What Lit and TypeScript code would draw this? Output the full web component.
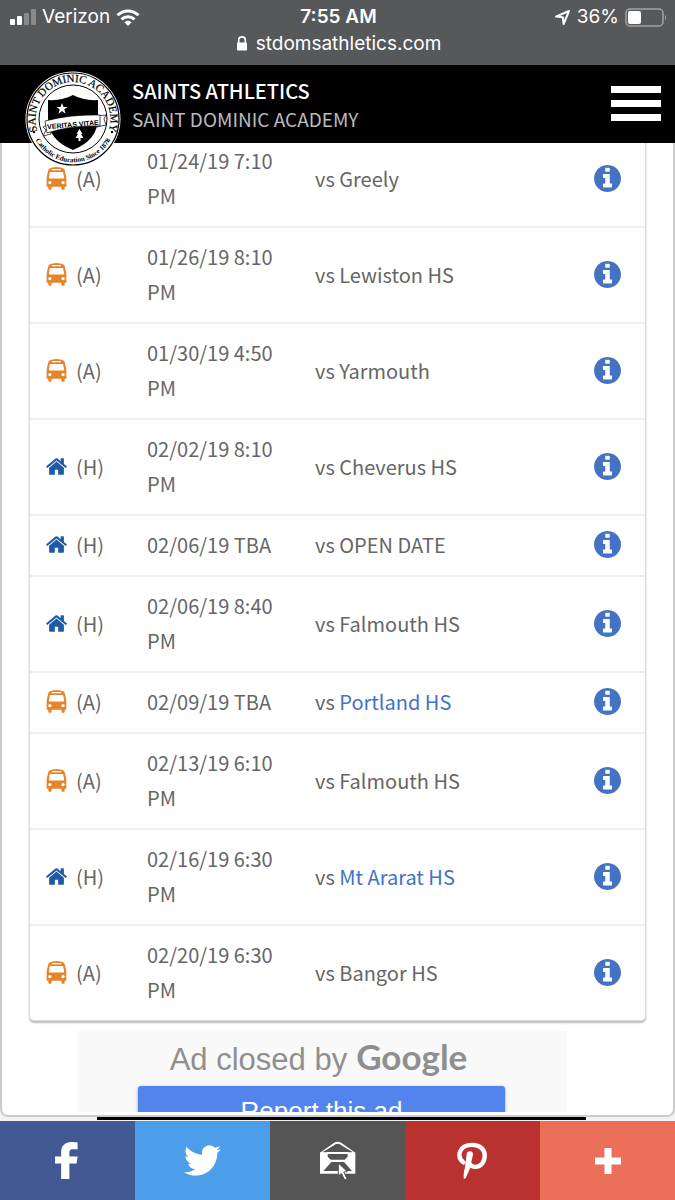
import { LitElement, html, css, svg } from 'lit';
import { customElement, property } from 'lit/decorators.js';

interface Game {
  home: boolean;
  date: string;
  opponent: string;
  linked?: boolean;
}

const GAMES: Game[] = [
  { home: false, date: '01/24/19 7:10 PM', opponent: 'Greely' },
  { home: false, date: '01/26/19 8:10 PM', opponent: 'Lewiston HS' },
  { home: false, date: '01/30/19 4:50 PM', opponent: 'Yarmouth' },
  { home: true, date: '02/02/19 8:10 PM', opponent: 'Cheverus HS' },
  { home: true, date: '02/06/19 TBA', opponent: 'OPEN DATE' },
  { home: true, date: '02/06/19 8:40 PM', opponent: 'Falmouth HS' },
  { home: false, date: '02/09/19 TBA', opponent: 'Portland HS', linked: true },
  { home: false, date: '02/13/19 6:10 PM', opponent: 'Falmouth HS' },
  { home: true, date: '02/16/19 6:30 PM', opponent: 'Mt Ararat HS', linked: true },
  { home: false, date: '02/20/19 6:30 PM', opponent: 'Bangor HS' },
];

const busIcon = html`<svg class="bus" viewBox="0 0 1792 1792" aria-hidden="true">
  <path d="M512 1216q0-53-37.5-90.5t-90.5-37.5-90.5 37.5-37.5 90.5 37.5 90.5 90.5 37.5 90.5-37.5 37.5-90.5zm1024 0q0-53-37.5-90.5t-90.5-37.5-90.5 37.5-37.5 90.5 37.5 90.5 90.5 37.5 90.5-37.5 37.5-90.5zm-46-396l-72-384q-5-23-22.5-37.5t-40.5-14.5h-918q-23 0-40.5 14.5t-22.5 37.5l-72 384q-5 30 14 53t49 23h1062q30 0 49-23t14-53zm-226-612q0-20-14-34t-34-14h-640q-20 0-34 14t-14 34 14 34 34 14h640q20 0 34-14t14-34zm400 725v603h-128v128q0 53-37.5 90.5t-90.5 37.5-90.5-37.5-37.5-90.5v-128h-768v128q0 53-37.5 90.5t-90.5 37.5-90.5-37.5-37.5-90.5v-128h-128v-603q0-112 25-223l103-454q9-78 97.5-137t230-89 312.5-30 312.5 30 230 89 97.5 137l105 454q23 102 23 223z"/>
</svg>`;

const homeIcon = html`<svg class="house" viewBox="0 0 1792 1792" aria-hidden="true">
  <path d="M1472 992v480q0 26-19 45t-45 19h-384v-384h-256v384h-384q-26 0-45-19t-19-45v-480q0-1 .5-3t.5-3l575-474 575 474q1 2 1 6zm223-69l-62 74q-8 9-21 11h-3q-13 0-21-7l-692-577-692 577q-12 8-24 7-13-2-21-11l-62-74q-8-10-7-23.5t11-21.5l719-599q32-26 76-26t76 26l244 204v-195q0-14 9-23t23-9h192q14 0 23 9t9 23v408l219 182q10 8 11 21.5t-7 23.5z"/>
</svg>`;

const infoIcon = html`<svg viewBox="128 128 1536 1536" aria-hidden="true">
  <path d="M1152 1376v-160q0-14-9-23t-23-9h-96v-512q0-14-9-23t-23-9h-320q-14 0-23 9t-9 23v160q0 14 9 23t23 9h96v320h-96q-14 0-23 9t-9 23v160q0 14 9 23t23 9h448q14 0 23-9t9-23zm-128-896v-160q0-14-9-23t-23-9h-192q-14 0-23 9t-9 23v160q0 14 9 23t23 9h192q14 0 23-9t9-23zm640 416q0 209-103 385.5t-279.5 279.5-385.5 103-385.5-103-279.5-279.5-103-385.5 103-385.5 279.5-279.5 385.5-103 385.5 103 279.5 279.5 103 385.5z"/>
</svg>`;

@customElement('status-bar')
export class StatusBar extends LitElement {
  static styles = css`
    :host {
      display: block;
      flex: none;
      padding: 4px 8px 8px 10px;
      background: #57585a;
      color: #fff;
      font-family: Inter, 'Liberation Sans', sans-serif;
      font-size: 19px;
      line-height: 26px;
    }

    .row {
      display: grid;
      grid-template-columns: 1fr auto 1fr;
      align-items: center;
    }

    .side {
      display: flex;
      align-items: center;
      gap: 6px;
    }

    .side.right {
      justify-content: flex-end;
    }

    .time {
      font-weight: 600;
    }

    .address {
      display: flex;
      justify-content: center;
      align-items: center;
      gap: 8px;
      line-height: 27px;
    }

    svg {
      display: block;
      fill: #fff;
    }
  `;

  render() {
    return html`
      <div class="row">
        <div class="side">
          <svg width="26" height="17" viewBox="0 0 26 17">
            <rect y="10" width="5" height="6" rx="1"/>
            <rect x="7" y="7" width="5" height="9" rx="1"/>
            <rect x="14" y="4" width="5" height="12" rx="1" opacity=".3"/>
            <rect x="21" width="5" height="16" rx="1" opacity=".3"/>
          </svg>
          <span>Verizon</span>
          <svg width="24" height="17" viewBox="0 0 24 17">
            <g fill="none" stroke="#fff" stroke-width="3">
              <path d="M1.5 6.2a15 15 0 0 1 21 0"/>
              <path d="M5.5 10.4a9.3 9.3 0 0 1 13 0"/>
            </g>
            <path d="M12 17l-3.6-3.8a5.2 5.2 0 0 1 7.2 0z"/>
          </svg>
        </div>
        <span class="time">7:55 AM</span>
        <div class="side right">
          <svg width="17" height="17" viewBox="0 0 17 17">
            <path d="M2 7.6L15 2 9.6 15l-.8-6.8z" fill="none" stroke="#fff" stroke-width="2" stroke-linejoin="round"/>
          </svg>
          <span>36%</span>
          <svg width="42" height="19" viewBox="0 0 42 19">
            <rect x="1" y="1" width="37" height="17" rx="4" fill="none" stroke="#a2a3a4" stroke-width="1.5"/>
            <rect x="3" y="3" width="13" height="13" rx="2"/>
            <path d="M40 6.5q2 3 0 6z" fill="#a2a3a4"/>
          </svg>
        </div>
      </div>
      <div class="address">
        <svg width="12" height="15" viewBox="0 0 12 15">
          <path d="M2.7 7V4.2a3.3 3.3 0 0 1 6.6 0V7" fill="none" stroke="#fff" stroke-width="1.6"/>
          <rect x="1" y="6.4" width="10" height="8" rx="1"/>
        </svg>
        <span>stdomsathletics.com</span>
      </div>
    `;
  }
}

@customElement('site-header')
export class SiteHeader extends LitElement {
  static styles = css`
    :host {
      display: flex;
      flex: none;
      box-sizing: border-box;
      position: relative;
      z-index: 1;
      align-items: flex-start;
      height: 78px;
      padding: 0 14px 0 25px;
      background: #000;
      color: #fff;
      font-family: 'Noto Sans CJK SC', 'Open Sans', sans-serif;
    }

    /* the seal hangs over the lower edge of the bar */
    .seal {
      display: block;
      flex: none;
      width: 96px;
      height: 96px;
      margin-top: 6px;
    }

    .titles {
      flex: 1;
      padding: 12px 0 0 11px;
      line-height: 28px;
    }

    h1 {
      margin: 0;
      font-size: 20px;
      font-weight: 500;
    }

    p {
      margin: 0;
      color: #bbb;
      font-size: 19px;
    }

    .menu {
      display: flex;
      flex-direction: column;
      gap: 7px;
      margin-top: 21px;
      padding: 0;
      border: 0;
      background: none;
    }

    .menu span {
      width: 50px;
      height: 7px;
      background: #fff;
    }
  `;

  render() {
    return html`
      <svg class="seal" viewBox="0 0 96 96" role="img" aria-label="Saint Dominic Academy seal">
        <defs>
          <path id="upper" d="M12 59A37.5 37.5 0 1 1 84 59"/>
          <path id="lower" d="M7 60A42.5 42.5 0 0 0 89 60"/>
        </defs>
        <circle cx="48" cy="48" r="47.5" fill="#fff"/>
        <circle cx="48" cy="48" r="46" fill="none" stroke="#000" stroke-width="1.2"/>
        <circle cx="48" cy="48" r="34" fill="none" stroke="#000" stroke-width="1"/>
        <g font-family="Liberation Serif, serif" text-anchor="middle" fill="#000">
          <text font-size="11" stroke="#000" stroke-width=".2"><textPath href="#upper" startOffset="50%">SAINT DOMINIC ACADEMY</textPath></text>
          <text font-size="7" font-weight="bold"><textPath href="#lower" startOffset="50%">Catholic Education Since 1878</textPath></text>
        </g>
        <circle cx="9" cy="61" r="1.2"/>
        <circle cx="87" cy="61" r="1.2"/>
        <path d="M48 24q11 6 25 5v18q0 22-25 32-25-10-25-32V29q14 1 25-5z"/>
        <path d="M37 32l1.5 4h4l-3.2 2.5 1.2 4.2-3.5-2.6-3.5 2.6 1.2-4.2-3.2-2.5h4z" fill="#fff"/>
        <path d="M54.5 58l3 5H56l2.5 4h-3v3h-2v-3h-3l2.5-4h-1.5z" fill="#fff"/>
        <g fill="#fff" stroke="#000" stroke-width=".7">
          <path d="M24 53l-6 3 3 3-3 6 8-2z"/>
          <path d="M71 45l10-1-2 4 2 6-9 2z"/>
          <path d="M20 50q26-7 55-6v11q-29-1-53 7z"/>
        </g>
        <text x="48" y="56" font-family="Liberation Sans, sans-serif" font-size="7" font-weight="bold" text-anchor="middle" transform="rotate(-5 48 54)">VERITAS VITAE</text>
      </svg>
      <div class="titles">
        <h1>SAINTS ATHLETICS</h1>
        <p>SAINT DOMINIC ACADEMY</p>
      </div>
      <button class="menu" aria-label="Menu"><span></span><span></span><span></span></button>
    `;
  }
}

@customElement('schedule-table')
export class ScheduleTable extends LitElement {
  static styles = css`
    :host {
      display: block;
      border: 1px solid #ddd;
      border-radius: 0 0 5px 5px;
      box-shadow: 0 2px 2px #bbb;
      background: #fff;
      color: #666;
      font-family: 'Noto Sans CJK SC', 'Open Sans', sans-serif;
      font-size: 20px;
      line-height: 35px;
    }

    table {
      width: 100%;
      border-collapse: collapse;
      table-layout: fixed;
    }

    td {
      padding: 11px 15px 13px;
      border-bottom: 2px solid #eee;
      vertical-align: middle;
    }

    tr:last-child td {
      border-bottom: 0;
    }

    .col-site {
      width: 102px;
    }

    .col-date {
      width: 168px;
    }

    .col-info {
      width: 66px;
    }

    .site {
      display: flex;
      align-items: center;
      gap: 8px;
    }

    svg {
      display: block;
    }

    .bus,
    .house {
      flex: none;
      width: 23px;
      height: 23px;
    }

    .bus {
      fill: #e5842b;
    }

    .house {
      fill: #1f5aa6;
    }

    a {
      color: #4472c4;
      text-decoration: none;
    }

    button {
      display: block;
      width: 27px;
      height: 27px;
      padding: 0;
      border: 0;
      background: none;
      fill: #4472c4;
    }
  `;

  @property({ attribute: false })
  games: Game[] = [];

  render() {
    return html`
      <table>
        <colgroup>
          <col class="col-site">
          <col class="col-date">
          <col>
          <col class="col-info">
        </colgroup>
        <tbody>
          ${this.games.map(
            (game) => html`
              <tr>
                <td>
                  <div class="site">${game.home ? homeIcon : busIcon}<span>${game.home ? '(H)' : '(A)'}</span></div>
                </td>
                <td>${game.date}</td>
                <td>vs ${game.linked ? html`<a href="#">${game.opponent}</a>` : game.opponent}</td>
                <td><button aria-label="Game details">${infoIcon}</button></td>
              </tr>
            `
          )}
        </tbody>
      </table>
    `;
  }
}

@customElement('closed-ad')
export class ClosedAd extends LitElement {
  static styles = css`
    :host {
      display: block;
      box-sizing: border-box;
      max-width: 489px;
      padding: 8px 61px 0;
      background: #f9f9f9;
      font-family: 'Liberation Sans', Arial, sans-serif;
      text-align: center;
    }

    .notice {
      display: flex;
      justify-content: center;
      align-items: baseline;
      gap: 9px;
      height: 38px;
      margin: 0;
      padding-right: 6px;
      color: #8f8f8f;
      font-size: 31px;
      line-height: 35px;
      white-space: nowrap;
    }

    .google {
      font-family: Lato, sans-serif;
      font-size: 35px;
      font-weight: 700;
    }

    button {
      display: block;
      width: 100%;
      height: 50px;
      margin-top: 9px;
      padding: 0;
      border: 0;
      border-radius: 3px;
      background: #5383ec;
      box-shadow: 0 1px 3px #999;
      color: #fff;
      font: 26px 'Liberation Sans', Arial, sans-serif;
    }
  `;

  render() {
    return html`
      <p class="notice"><span>Ad closed by</span><span class="google">Google</span></p>
      <button>Report this ad</button>
    `;
  }
}

const SHARE_LINKS = [
  {
    name: 'facebook',
    label: 'Share on Facebook',
    width: 24,
    height: 36,
    icon: svg`<path d="M22 .5V7h-4.5c-3 0-3.5 1.2-3.5 4v3h8l-1 7h-7v15H6V21H0v-7h6v-4C6 3.5 10 0 16 0q4 0 6 .5z"/>`,
  },
  {
    name: 'twitter',
    label: 'Share on Twitter',
    width: 24,
    height: 24,
    icon: svg`<path d="M23.953 4.57a10 10 0 01-2.825.775 4.958 4.958 0 002.163-2.723c-.951.555-2.005.959-3.127 1.184a4.92 4.92 0 00-8.384 4.482C7.69 8.095 4.067 6.13 1.64 3.162a4.822 4.822 0 00-.666 2.475c0 1.71.87 3.213 2.188 4.096a4.904 4.904 0 01-2.228-.616v.06a4.923 4.923 0 003.946 4.827 4.996 4.996 0 01-2.212.085 4.936 4.936 0 004.604 3.417 9.867 9.867 0 01-6.102 2.105c-.39 0-.779-.023-1.17-.067a13.995 13.995 0 007.557 2.209c9.053 0 13.998-7.496 13.998-13.985 0-.21 0-.42-.015-.63A9.935 9.935 0 0024 4.59z"/>`,
  },
  {
    name: 'email',
    label: 'Share by email',
    width: 108,
    height: 120,
    icon: svg`
      <path d="M4 36L44 8q9-6 18 0l40 28" fill="none" stroke="#fff" stroke-width="6"/>
      <path d="M0 34h106v64H0z"/>
      <path d="M8 33l38-22q7-4 14 0l38 22H8zM23 39h60v8l-9 9H32l-9-9zM34 63h38l24 27H10z" fill="#555"/>
      <path d="M20 33h66v6H20z"/>
      <path d="M55 66l27 26-11 1 10 20-7 4-10-20-9 8z" stroke="#555" stroke-width="3"/>
    `,
  },
  {
    name: 'pinterest',
    label: 'Pin on Pinterest',
    width: 32,
    height: 38,
    icon: svg`
      <path d="M6.5 21C-.5 15 1.5 3 16 3c8 0 12.5 5 12.5 10.5 0 7-4 12-9.5 12-3 0-5-1-6-3" fill="none" stroke="#fff" stroke-width="4.5" stroke-linecap="round"/>
      <path d="M10 12.5a3.2 3.2 0 0 1 6.4.5L13 28 9 37l-2 1c-.5-4 0-8 1-11z"/>
    `,
  },
  {
    name: 'more',
    label: 'More sharing options',
    width: 26,
    height: 26,
    icon: svg`<path d="M9.5 0h7v9.5H26v7h-9.5V26h-7v-9.5H0v-7h9.5z"/>`,
  },
];

@customElement('share-bar')
export class ShareBar extends LitElement {
  static styles = css`
    :host {
      display: flex;
      flex: none;
      height: 79px;
    }

    a {
      display: flex;
      flex: 1;
      align-items: center;
      justify-content: center;
    }

    svg {
      height: 37px;
      fill: #fff;
    }

    .facebook {
      background: #435993;
    }

    .twitter {
      background: #4c9eea;
    }

    .email {
      background: #555;
    }

    .email svg {
      height: 40px;
    }

    .pinterest {
      background: #b9322f;
    }

    .more {
      background: #ec6f5a;
    }

    .more svg {
      height: 26px;
    }
  `;

  render() {
    return html`${SHARE_LINKS.map(
      (link) => html`
        <a class=${link.name} href="#" aria-label=${link.label}>
          <svg viewBox="0 0 ${link.width} ${link.height}">${link.icon}</svg>
        </a>
      `
    )}`;
  }
}

@customElement('app-root')
export class AppRoot extends LitElement {
  static styles = css`
    :host {
      display: flex;
      flex-direction: column;
      height: 100vh;
      overflow: hidden;
      background: #f2f2f2;
    }

    .panel {
      flex: 1;
      min-height: 0;
      display: flex;
      flex-direction: column;
      padding: 0 26px 3px;
      border: solid #ccc;
      border-width: 0 2px 2px;
      border-radius: 0 0 8px 8px;
      background: #fff;
    }

    .scroller {
      flex: 1;
      min-height: 0;
      overflow: hidden;
      padding: 0 1px;
    }

    /* the list is scrolled a little way under the header */
    schedule-table {
      margin-top: -12px;
    }

    closed-ad {
      margin: 10px 0 0 48px;
    }

    .footer-edge {
      flex: none;
      height: 3px;
      padding: 0 89px 1px 97px;
    }

    .footer-edge div {
      height: 3px;
      background: #000;
    }
  `;

  render() {
    return html`
      <status-bar></status-bar>
      <site-header></site-header>
      <main class="panel">
        <div class="scroller">
          <schedule-table .games=${GAMES}></schedule-table>
          <closed-ad></closed-ad>
        </div>
      </main>
      <div class="footer-edge"><div></div></div>
      <share-bar></share-bar>
    `;
  }
}
